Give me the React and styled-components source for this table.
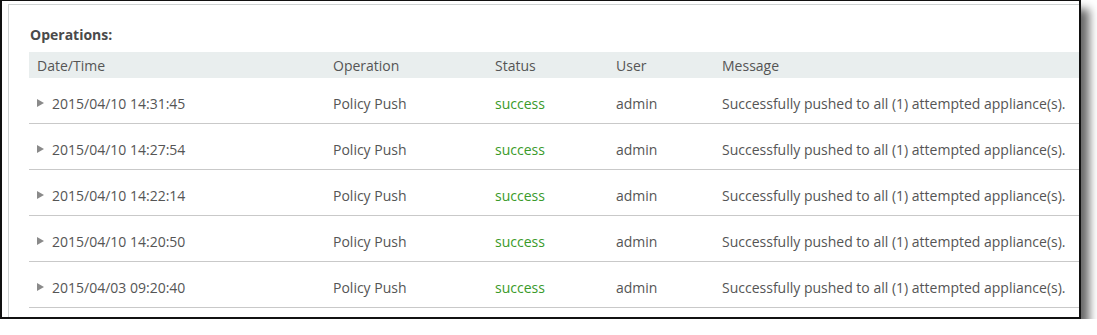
import React from "react";
import styled, { createGlobalStyle } from "styled-components";

const GlobalStyle = createGlobalStyle`
  html, body {
    margin: 0;
    padding: 0;
    background: #ffffff;
  }
  body {
    font-family: "Open Sans", "Liberation Sans", sans-serif;
    color: #555555;
  }
`;

const Frame = styled.div`
  box-sizing: border-box;
  width: 1081px;
  height: 319px;
  border: 2px solid #111;
  border-top-width: 1px;
  background: #fff;
  overflow: hidden;
  padding: 3px 0 0 6px;
  box-shadow: 8px 9px 9px rgba(0, 0, 0, 0.6);
`;

const Panel = styled.section`
  box-sizing: border-box;
  height: 400px;
  border-top: 1px solid #cfd3d3;
  border-left: 1px solid #cfd3d3;
  padding: 21px 0 0 20px;
`;

const Title = styled.h3`
  margin: 0 0 8px 1px;
  font-size: 14px;
  font-weight: 700;
  color: #4a4a4a;
  line-height: 18px;
`;

const Row = styled.div`
  box-sizing: border-box;
  display: grid;
  grid-template-columns: 296px 162px 121px 106px 1fr;
  align-items: center;
  height: ${(p) => (p.$head ? "26px" : "46px")};
  padding-top: ${(p) => (p.$head ? "0" : "5px")};
  background: ${(p) => (p.$head ? "#e9eeee" : "transparent")};
  border-bottom: ${(p) => (p.$head ? "none" : "1px solid #c9c9c9")};
  font-size: 14px;
  color: #555;
  white-space: nowrap;
`;

const Cell = styled.div`
  padding-left: 8px;
  display: flex;
  align-items: center;
  color: ${(p) => (p.$ok ? "#3a9a2a" : "inherit")};
`;

const Arrow = styled.span`
  width: 0;
  height: 0;
  border-top: 4.5px solid transparent;
  border-bottom: 4.5px solid transparent;
  border-left: 7px solid #8a8a8a;
  margin-right: 8px;
`;

const rows = [
  "2015/04/10 14:31:45",
  "2015/04/10 14:27:54",
  "2015/04/10 14:22:14",
  "2015/04/10 14:20:50",
  "2015/04/03 09:20:40",
];

export default function App() {
  return (
    <>
      <GlobalStyle />
      <Frame>
        <Panel>
          <Title>Operations:</Title>
          <Row $head>
            <Cell>Date/Time</Cell>
            <Cell>Operation</Cell>
            <Cell>Status</Cell>
            <Cell>User</Cell>
            <Cell>Message</Cell>
          </Row>
          {rows.map((d) => (
            <Row key={d}>
              <Cell>
                <Arrow />
                {d}
              </Cell>
              <Cell>Policy Push</Cell>
              <Cell $ok>success</Cell>
              <Cell>admin</Cell>
              <Cell>Successfully pushed to all (1) attempted appliance(s).</Cell>
            </Row>
          ))}
        </Panel>
      </Frame>
    </>
  );
}
